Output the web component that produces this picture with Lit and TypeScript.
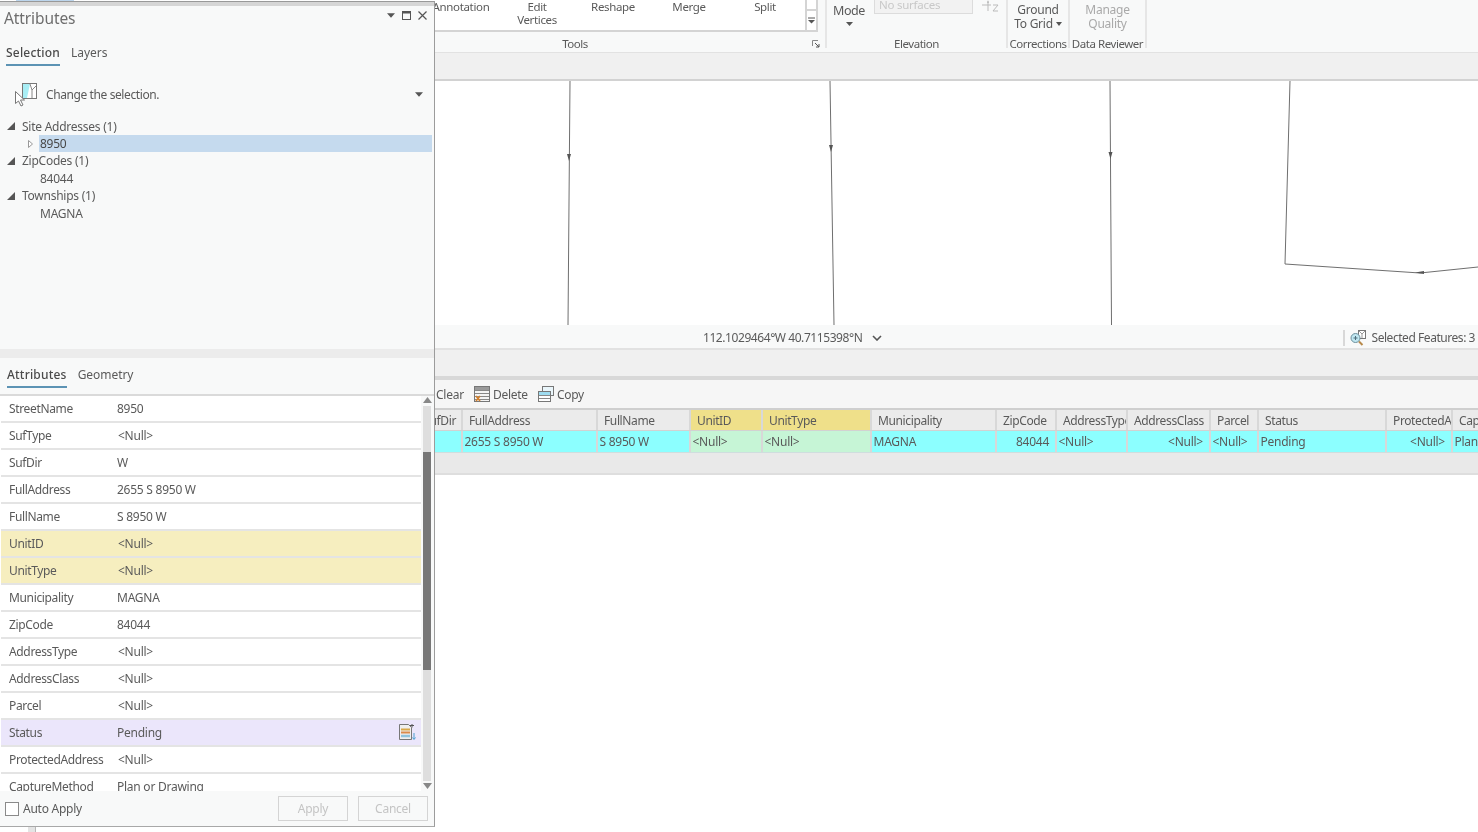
import { LitElement, html, css, svg } from "lit";
import { customElement } from "lit/decorators.js";

const ROWS: [string, string, string?][] = [
  ["StreetName", "8950"],
  ["SufType", "<Null>"],
  ["SufDir", "W"],
  ["FullAddress", "2655 S 8950 W"],
  ["FullName", "S 8950 W"],
  ["UnitID", "<Null>", "req"],
  ["UnitType", "<Null>", "req"],
  ["Municipality", "MAGNA"],
  ["ZipCode", "84044"],
  ["AddressType", "<Null>"],
  ["AddressClass", "<Null>"],
  ["Parcel", "<Null>"],
  ["Status", "Pending", "edit"],
  ["ProtectedAddress", "<Null>"],
  ["CaptureMethod", "Plan or Drawing"],
];

const COLS: { h: string; v: string; w: number; cls?: string; right?: boolean; clip?: boolean }[] = [
  { h: "SufDir", v: "", w: 28, clip: true },
  { h: "FullAddress", v: "2655 S 8950 W", w: 135 },
  { h: "FullName", v: "S 8950 W", w: 93 },
  { h: "UnitID", v: "<Null>", w: 72, cls: "req" },
  { h: "UnitType", v: "<Null>", w: 109, cls: "req" },
  { h: "Municipality", v: "MAGNA", w: 125 },
  { h: "ZipCode", v: "84044", w: 60, right: true },
  { h: "AddressType", v: "<Null>", w: 71 },
  { h: "AddressClass", v: "<Null>", w: 83, right: true },
  { h: "Parcel", v: "<Null>", w: 48 },
  { h: "Status", v: "Pending", w: 128 },
  { h: "ProtectedAddress", v: "<Null>", w: 66, right: true },
  { h: "CaptureMethod", v: "Plan or Drawing", w: 60 },
];

const TOOLS = [["Annotation"], ["Edit", "Vertices"], ["Reshape"], ["Merge"], ["Split"]];

const triDown = svg`<path d="M0 0h9L4.5 5z" fill="#555"/>`;

@customElement("app-root")
export class AppRoot extends LitElement {
  static styles = css`
    :host {
      display: block;
      position: relative;
      width: 1478px;
      height: 832px;
      overflow: hidden;
      background: #fff;
      font-family: "Noto Sans", "Open Sans", sans-serif;
      font-size: 12px;
      letter-spacing: -0.25px;
      color: #5a5a5a;
      filter: blur(0.35px);
    }
    svg { display: block; flex: none; }
    .app { display: flex; flex-direction: column; padding-left: 435px; }

    .ribbon { height: 52px; display: flex; background: #f8f9f9; border-bottom: 1px solid #e2e2e2; overflow: hidden; }
    .group { height: 48px; display: flex; flex-direction: column; border-right: 2px solid #e6e6e6; flex: none; }
    .group-body { height: 37px; display: flex; flex: none; }
    .group-label { height: 14px; flex: none; display: flex; align-items: center; justify-content: center; position: relative; font-size: 11.5px; letter-spacing: -0.45px; line-height: 14px; }
    .g-tools { width: 390px; }
    .g-tools .group-label { padding-right: 110px; box-sizing: border-box; width: 390px; }
    .g-elev { width: 179px; }
    .g-corr { width: 60px; }
    .g-rev { width: 75px; }
    .gallery { height: 32px; width: 382px; margin-left: -12px; display: flex; background: #fff; border-bottom: 2px solid #d4d4d4; box-sizing: border-box; flex: none; }
    .tool { width: 76px; flex: none; text-align: center; line-height: 13px; font-size: 11.5px; letter-spacing: -0.35px; }
    .gal-scroll { width: 13px; height: 32px; border-left: 2px solid #d4d4d4; border-right: 2px solid #d4d4d4; border-bottom: 2px solid #d4d4d4; box-sizing: border-box; display: flex; flex-direction: column; flex: none; background: #fff; }
    .gal-top { height: 9px; border-bottom: 2px solid #d4d4d4; }
    .gal-bot { flex: 1; display: flex; align-items: center; justify-content: center; }
    .launcher { position: absolute; right: 5px; top: 3px; }
    .mode { margin-left: 5px; width: 34px; display: flex; flex-direction: column; align-items: center; font-size: 12.5px; letter-spacing: -0.4px; line-height: 16px; padding-top: 3px; }
    .mode svg { margin-top: 3px; }
    .surf { margin-left: 8px; width: 99px; height: 14px; box-sizing: border-box; margin-top: 0; background: #f2f2f2; border: 1px solid #dcdcdc; border-top: 0; color: #c8c8c8; font-size: 11.5px; line-height: 10px; padding-left: 4px; overflow: hidden; }
    .zicon { margin-left: 9px; }
    .twoline { flex: 1; text-align: center; font-size: 12px; line-height: 13.5px; padding-top: 3px; }
    .caret { display: inline-block; width: 0; height: 0; border: 3.5px solid transparent; border-top: 4px solid #555; border-bottom: 0; vertical-align: 2px; margin-left: 3px; }
    .off { color: #a9a9a9; }

    .band { height: 26px; background: #f0f0f0; border-bottom: 2px solid #d2d2d2; }
    .map { height: 244px; background: #fff; }
    .status { height: 21px; padding-top: 2px; background: #f8f9f9; border-bottom: 2px solid #e2e2e2; display: flex; align-items: center; padding-left: 268px; padding-right: 3px; }
    .coord { letter-spacing: -0.43px; margin-right: 10px; }
    .sel { margin-left: auto; display: flex; align-items: center; gap: 6px; border-left: 2px solid #d8d8d8; padding-left: 5px; height: 16px; letter-spacing: -0.45px; }
    .band2 { height: 26px; background: #f0f0f0; border-bottom: 4px solid #d8d8d8; }
    .tbar { height: 28px; background: #f6f6f6; display: flex; align-items: center; padding-left: 1px; border-bottom: 2px solid #cfcfcf; box-sizing: content-box; }
    .tbtn { display: flex; align-items: center; gap: 3px; margin-right: 10px; }
    .thead, .trow { display: flex; }
    .thead { height: 20px; background: #ebebeb; border-bottom: 1px solid #d2d2d2; letter-spacing: -0.38px; }
    .th, .td { flex: none; box-sizing: border-box; white-space: nowrap; overflow: hidden; border-right: 2px solid #d8d8d8; display: flex; align-items: center; }
    .th { padding-left: 6px; }
    .th.req { background: #efe08a; }
    .th.clip { justify-content: flex-end; padding: 0 5px 0 0; }
    .th.last, .td.last { border-right: 0; }
    .trow { height: 22px; background: #8cffff; border-bottom: 1px solid #cfdede; box-sizing: border-box; }
    .td { padding: 0 1.5px; }
    .td.req { background: #c6f5d6; }
    .td.right { justify-content: flex-end; padding-right: 6px; }
    .tfoot { height: 20px; background: #e9e9e9; border-bottom: 2px solid #dedede; }

    .sliver { position: absolute; left: 16px; top: 0; width: 58px; height: 1px; background: #bcd5ec; }
    .stub { position: absolute; left: 28px; top: 826px; width: 7px; height: 6px; background: #e4e4e4; border-right: 1px solid #b8b8b8; }

    .panel { position: absolute; left: 0; top: 1px; width: 435px; height: 826px; box-sizing: border-box; background: #f8f9f9; border-top: 1px solid #999; border-right: 1.5px solid #9c9c9c; border-bottom: 1px solid #a8a8a8; display: flex; flex-direction: column; }
    .grip { height: 4px; background: #d6d6d6; flex: none; }
    .title { height: 24px; display: flex; align-items: center; padding-left: 4px; padding-right: 7px; font-size: 15.5px; letter-spacing: -0.1px; color: #6e6e6e; flex: none; }
    .ctrls { margin-left: auto; display: flex; align-items: center; gap: 7px; margin-top: -5px; }
    .tabs { display: flex; gap: 11px; padding-left: 6px; font-size: 12px; letter-spacing: -0.05px; flex: none; }
    .tab { padding-bottom: 2px; border-bottom: 2px solid transparent; line-height: 18px; height: 18px; }
    .tab.on { border-bottom-color: #5c93b4; color: #4a4a4a; font-weight: 500; letter-spacing: 0.2px; }
    .tabs.a { margin-top: 14px; }
    .pick { display: flex; align-items: center; height: 28px; margin-top: 14px; padding-left: 14px; padding-right: 11px; flex: none; letter-spacing: -0.4px; }
    .pick span { margin-left: 7px; }
    .pick svg:last-child { margin-left: auto; }
    .tree { margin-top: 9.5px; flex: 1; }
    .tn { height: 17.4px; display: flex; align-items: center; position: relative; white-space: nowrap; }
    .tn .tw { width: 22px; flex: none; display: flex; padding-left: 7px; box-sizing: border-box; }
    .tn.leaf { padding-left: 40px; }
    .tn.hit { margin-left: 39px; margin-right: 2px; padding-left: 1px; background: #c5daee; color: #484848; }
    .tn.hit svg { position: absolute; left: -11px; top: 5px; }
    .split { height: 9px; background: #ececec; flex: none; }
    .tabs.b { margin-top: 8px; height: 28px; padding-left: 7px; }
    .grid { height: 397px; display: flex; background: #fff; border-top: 2px solid #dadada; box-sizing: border-box; flex: none; overflow: hidden; }
    .rows { width: 421px; flex: none; overflow: hidden; }
    .row { height: 27px; box-sizing: border-box; border-bottom: 2px solid #e4e4e4; display: flex; align-items: center; padding-left: 8px; position: relative; margin-left: 1px; }
    .row .k { width: 108px; flex: none; letter-spacing: -0.35px; }
    .row.req { background: #f6eebf; }
    .row.edit { background: #ebe6fb; }
    .row svg { position: absolute; right: 5px; top: 4px; }
    .v.null { margin-left: 1px; }
    .sb { flex: 1; background: #f8f9f9; display: flex; flex-direction: column; align-items: flex-start; padding-left: 2px; padding-top: 1px; }
    .track { width: 8px; height: 375px; margin-top: 3px; background: #dedede; box-sizing: border-box; padding-top: 46px; }
    .thumb { height: 218px; background: #777; }
    .sb svg { margin-left: -.5px; }
    .arrowd { margin-top: 2px; }
    .foot { height: 35px; flex: none; display: flex; align-items: center; padding-left: 5px; padding-right: 6px; gap: 10px; }
    .foot label { display: flex; align-items: center; gap: 4px; margin-right: auto; }
    .box { width: 14px; height: 14px; box-sizing: border-box; border: 1px solid #8a8a8a; background: #fff; }
    .btn { width: 70px; height: 25px; box-sizing: border-box; border: 1.5px solid #d4d4d4; display: flex; align-items: center; justify-content: center; color: #c4c4c4; }
  `;

  private tableIcon(kind: "delete" | "copy") {
    return kind === "delete"
      ? svg`<svg width="16" height="17" viewBox="0 0 16 17">
          <rect x=".5" y=".5" width="15" height="15" fill="#f4f4f4" stroke="#777"/>
          <path d="M1 4.500h14M1 7.500h14M1 10.500h14M1 13.500h14" stroke="#888"/>
          <rect x="1" y="1" width="14" height="3" fill="#9a9a9a"/>
          <path d="M2 10l4 5M6 10l-4 5" stroke="#d2812f" stroke-width="1.6"/>
        </svg>`
      : svg`<svg width="16" height="16" viewBox="0 0 16 16">
          <rect x="4.500" y=".5" width="11" height="9" fill="#eaf6fb" stroke="#777"/>
          <rect x=".5" y="5.500" width="12" height="10" fill="#fff" stroke="#777"/>
          <rect x="1" y="6" width="11" height="3" fill="#9fdcf0"/>
          <path d="M1 9.500h11M1 12.500h11" stroke="#888"/>
        </svg>`;
  }

  render() {
    return html`
      <div class="app">
        <div class="ribbon">
          <div class="group g-tools">
            <div class="group-body">
              <div class="gallery">
                ${TOOLS.map((t) => html`<div class="tool">${t.map((l) => html`<div>${l}</div>`)}</div>`)}
              </div>
              <div class="gal-scroll">
                <div class="gal-top"></div>
                <div class="gal-bot">
                  <svg width="7" height="7" viewBox="0 0 7 7"><path d="M0 1h7" stroke="#555"/><path d="M0 3h7L3.500 6.500z" fill="#555"/></svg>
                </div>
              </div>
            </div>
            <div class="group-label">Tools
              <svg class="launcher" width="8" height="8" viewBox="0 0 8 8"><path d="M.5 6V.5H6" fill="none" stroke="#888"/><path d="M3 3l4 4M7 4v3H4" fill="none" stroke="#555"/></svg>
            </div>
          </div>
          <div class="group g-elev">
            <div class="group-body">
              <div class="mode">Mode
                <svg width="7" height="4" viewBox="0 0 9 5">${triDown}</svg>
              </div>
              <div class="surf">No surfaces</div>
              <svg class="zicon" width="17" height="13" viewBox="0 0 17 13"><path d="M0 5h9M6 1v10" stroke="#bbb"/><path d="M5 3l1-3 1 3z" fill="#bbb"/><path d="M11 5h5l-5 6h5" fill="none" stroke="#bbb"/></svg>
            </div>
            <div class="group-label">Elevation</div>
          </div>
          <div class="group g-corr">
            <div class="group-body"><div class="twoline">Ground<br />To Grid<span class="caret"></span></div></div>
            <div class="group-label">Corrections</div>
          </div>
          <div class="group g-rev">
            <div class="group-body"><div class="twoline off">Manage<br />Quality</div></div>
            <div class="group-label">Data Reviewer</div>
          </div>
        </div>
        <div class="band"></div>
        <div class="map">
          <svg width="1043" height="244" viewBox="435 81 1043 244">
            <g fill="none" stroke="#6f6f6f" stroke-width="1">
              <path d="M570 81L568 325M830 81L834 325M1110 81L1111.500 325M1290 81L1285 264L1420 273L1478 267"/>
            </g>
            <g fill="#555">
              <path d="M567 154h4l-2 7zM829 145h4l-2 7zM1108.500 152h4l-2 7zM1415 272.500l9-1.500v3z"/>
            </g>
          </svg>
        </div>
        <div class="status">
          <span class="coord">112.1029464°W 40.7115398°N</span>
          <svg width="10" height="6" viewBox="0 0 10 6"><path d="M1 1l4 4 4-4" fill="none" stroke="#555" stroke-width="1.6"/></svg>
          <div class="sel">
            <svg width="16" height="16" viewBox="0 0 16 16">
              <rect x="8.500" y=".5" width="7" height="8" fill="#fff" stroke="#777"/>
              <path d="M9 1l3 3 3-3M12 4v4" fill="none" stroke="#999"/>
              <circle cx="5.500" cy="8" r="4.500" fill="#bfe6f0" stroke="#6d8f9c"/>
              <path d="M3.500 8h4M5.500 6v4" stroke="#4f6f7c"/>
              <path d="M9 11.500l3.500 3.500" stroke="#b7894a" stroke-width="2"/>
            </svg>
            <span>Selected Features: 3</span>
          </div>
        </div>
        <div class="band2"></div>
        <div class="tbar">
          <div class="tbtn">Clear</div>
          <div class="tbtn">${this.tableIcon("delete")}<span>Delete</span></div>
          <div class="tbtn">${this.tableIcon("copy")}<span>Copy</span></div>
        </div>
        <div class="thead">
          ${COLS.map((c, i) => html`<div class="th ${c.cls ?? ""} ${c.clip ? "clip" : ""} ${i === COLS.length - 1 ? "last" : ""}" style="width:${c.w}px">${c.h}</div>`)}
        </div>
        <div class="trow">
          ${COLS.map((c, i) => html`<div class="td ${c.cls ?? ""} ${c.right ? "right" : ""} ${i === COLS.length - 1 ? "last" : ""}" style="width:${c.w}px">${c.v}</div>`)}
        </div>
        <div class="tfoot"></div>
      </div>

      <div class="sliver"></div>
      <div class="stub"></div>

      <div class="panel">
        <div class="grip"></div>
        <div class="title">Attributes
          <div class="ctrls">
            <svg width="8" height="5" viewBox="0 0 9 5">${triDown}</svg>
            <svg width="9" height="9" viewBox="0 0 9 9"><rect x=".5" y=".5" width="8" height="8" fill="none" stroke="#555"/><path d="M0 1.500h9" stroke="#555" stroke-width="2"/></svg>
            <svg width="9" height="9" viewBox="0 0 9 9"><path d="M.5.5l8 8M8.500.5l-8 8" stroke="#555" stroke-width="1.200"/></svg>
          </div>
        </div>
        <div class="tabs a"><div class="tab on">Selection</div><div class="tab">Layers</div></div>
        <div class="pick">
          <svg width="25" height="25" viewBox="0 0 25 25">
            <rect x="8.500" y="1.500" width="14" height="15" fill="#fff" stroke="#777"/>
            <path d="M9 2h7l-3 14H9z" fill="#a8eef5"/>
            <path d="M16 2l2 6 4-4M18 8v8" fill="none" stroke="#888"/>
            <path d="M1.500 9.500v12l3-2.500 2.500 5 2-1-2.500-5h4z" fill="#fff" stroke="#777"/>
          </svg>
          <span>Change the selection.</span>
          <svg width="8" height="5" viewBox="0 0 9 5">${triDown}</svg>
        </div>
        <div class="tree">
          ${this.group("Site Addresses (1)")}
          <div class="tn hit">
            <svg width="5" height="8" viewBox="0 0 5 8"><path d="M.5.5l4 3.500-4 3.500z" fill="#fff" stroke="#999"/></svg>
            8950
          </div>
          ${this.group("ZipCodes (1)")}
          <div class="tn leaf">84044</div>
          ${this.group("Townships (1)")}
          <div class="tn leaf">MAGNA</div>
        </div>
        <div class="split"></div>
        <div class="tabs b"><div class="tab on">Attributes</div><div class="tab">Geometry</div></div>
        <div class="grid">
          <div class="rows">
            ${ROWS.map(
              ([k, v, c]) => html`<div class="row ${c ?? ""}">
                <div class="k">${k}</div>
                <div class="v ${v === "<Null>" ? "null" : ""}">${v}</div>
                ${c === "edit"
                  ? svg`<svg width="17" height="17" viewBox="0 0 17 17">
                      <path d="M.5.5h9l3 3v12H.5z" fill="#efefef" stroke="#777"/>
                      <path d="M2 5.500h9" stroke="#d9a94a" stroke-width="2"/><path d="M2 8.500h9" stroke="#d98a4a" stroke-width="2"/><path d="M2 12h9" stroke="#8fc3dc" stroke-width="2.500"/>
                      <path d="M11 1.500h4M13 0v3.500" stroke="#555"/>
                      <path d="M15 9v6M13.500 13.500l1.500 2 1.500-2" fill="none" stroke="#4a9fd0"/>
                    </svg>`
                  : ""}
              </div>`
            )}
          </div>
          <div class="sb">
            <svg width="9" height="6" viewBox="0 0 9 6"><path d="M0 6h9L4.500 0z" fill="#888"/></svg>
            <div class="track"><div class="thumb"></div></div>
            <svg class="arrowd" width="9" height="6" viewBox="0 0 9 6"><path d="M0 0h9L4.500 6z" fill="#888"/></svg>
          </div>
        </div>
        <div class="foot">
          <label><span class="box"></span>Auto Apply</label>
          <div class="btn">Apply</div>
          <div class="btn">Cancel</div>
        </div>
      </div>
    `;
  }

  private group(label: string) {
    return html`<div class="tn">
      <span class="tw"><svg width="8" height="8" viewBox="0 0 8 8"><path d="M8 0v8H0z" fill="#555"/></svg></span>${label}
    </div>`;
  }
}
